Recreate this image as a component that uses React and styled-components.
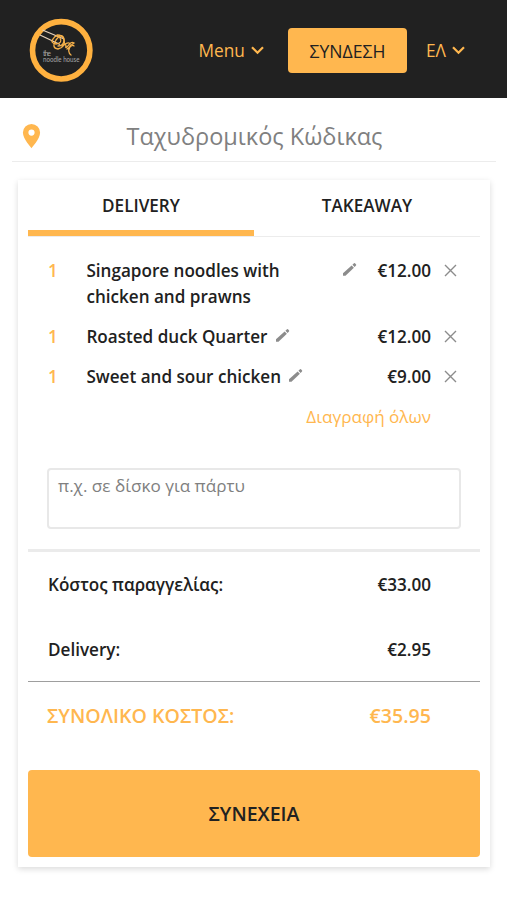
import React from 'react';
import styled, {createGlobalStyle} from 'styled-components';

const GlobalStyle=createGlobalStyle`
    *{
        box-sizing:border-box;
    }
    body{
        margin:0;
        background:#fff;
        color:#212121;
        font-family:"Open Sans","Noto Sans",sans-serif;
        font-size:17.1px;
        line-height:26px;
    }
`
const Page=styled.div`
    min-height:900px;
    display:flow-root;
`
const Header=styled.header`
    display:flex;
    align-items:center;
    height:98px;
    padding:0 42px 0 29px;
    background:#212121;
    color:#ffb74f;
`
const Logo=styled.svg`
    display:block;
    width:65px;
    height:65px;
    margin-top:2px;
`
const Nav=styled.nav`
    display:flex;
    align-items:center;
    margin-left:auto;
    padding-top:3px;
`
const NavLink=styled.a`
    display:flex;
    align-items:center;
    gap:6px;
    font-size:17.3px;
    svg{
        margin-top:-1px;
    }
`
const LoginButton=styled.button`
    width:119px;
    height:45px;
    margin:0 19px 0 24px;
    padding:0;
    border:0;
    border-radius:4px;
    background:#ffb74f;
    color:#212121;
    font:500 17.6px "Open Sans","Noto Sans",sans-serif;
`
const Postcode=styled.div`
    display:grid;
    grid-template-columns:38px 1fr 46px;
    align-items:center;
    height:64px;
    margin:0 11px 0 12px;
    padding:13px 0 0 9px;
    border-bottom:1px solid #ececec;
`
const PostcodeInput=styled.input`
    width:100%;
    border:0;
    outline:none;
    padding:0;
    background:transparent;
    text-align:center;
    font:400 23.5px "Open Sans","Noto Sans",sans-serif;
    &::placeholder{
        color:#808080;
        opacity:1;
    }
`
const Card=styled.main`
    margin:18px 17px 0 18px;
    padding:0 10px 10px;
    height:687px;
    background:#fff;
    box-shadow:0 2px 6px rgba(0,0,0,.15);
`
const Tabs=styled.div`
    display:flex;
    height:57px;
    border-bottom:1px solid #ececec;
`
const Tab=styled.div`
    flex:1;
    height:56px;
    padding-top:13px;
    text-align:center;
    font-weight:600;
    border-bottom:${props=>props.$active ? '6px solid #ffb74f' : '0'};
`
const Items=styled.div`
    display:grid;
    gap:14px;
    padding:21px 20px 0 20px;
`
const Item=styled.div`
    display:grid;
    grid-template-columns:38.4px 1fr 74px 29px;
    font-weight:600;
`
const Quantity=styled.span`
    color:#ffb74f;
`
const Description=styled.div`
    display:flex;
    justify-content:${props=>props.$wide ? 'space-between' : 'flex-start'};
    gap:7px;
    svg{
        flex:none;
        margin-top:4px;
    }
`
const Name=styled.span`
    flex:0 1 auto;
`
const Price=styled.span`
    text-align:right;
`
const Remove=styled.svg`
    margin:6px 0 0 13px;
`
const ClearAll=styled.a`
    justify-self:end;
    padding-right:29px;
    color:#ffb74f;
`
const Comment=styled.textarea`
    display:block;
    width:414px;
    height:61px;
    margin:38px 19px 20px;
    padding:4px 9px;
    resize:none;
    outline:none;
    border:2px solid #e8e8e8;
    border-radius:4px;
    font:400 17.1px/24px "Open Sans","Noto Sans",sans-serif;
    &::placeholder{
        color:#808080;
        opacity:1;
    }
`
const Costs=styled.div`
    border-top:3px solid #ebebeb;
    border-bottom:1px solid #9e9e9e;
    padding:20px 49px 18px 20px;
`
const CostRow=styled.div`
    display:flex;
    justify-content:space-between;
    font-weight:600;
    & + &{
        margin-top:39px;
    }
`
const Total=styled(CostRow)`
    padding:21px 49px 0 19px;
    color:#ffb74f;
    font-size:19.6px;
`
const Continue=styled.button`
    display:block;
    width:100%;
    height:87px;
    margin-top:41px;
    border:0;
    border-radius:4px;
    background:#ffb74f;
    color:#212121;
    font:600 19.5px "Open Sans","Noto Sans",sans-serif;
`

const items=[
    {name:<>Singapore noodles with<br/>chicken and prawns</>,price:'€12.00',wide:true},
    {name:'Roasted duck Quarter',price:'€12.00'},
    {name:'Sweet and sour chicken',price:'€9.00'},
];

const Chevron=()=>(
    <svg width="13" height="9" viewBox="0 0 13 9" fill="none" stroke="#ffb74f" strokeWidth="2.2">
        <path d="M1 1.2L6.5 6.8L12 1.2"/>
    </svg>
)

const Pencil=()=>(
    <svg width="15" height="15" viewBox="0 0 15 15" fill="#8c8c8c">
        <path d="M1 11.2L9.6 3.4L11.9 5.7L3.5 13.8H1Z"/>
        <path d="M10.4 2.7L12 1.2Q12.5.8 13 1.2L14.1 2.4Q14.5 2.9 14 3.4L12.6 5Z"/>
    </svg>
)

const BrandLogo=()=>(
    <Logo viewBox="0 0 65 65" fill="none">
        <circle cx="32.2" cy="32.3" r="28.7" stroke="#ffb13f" strokeWidth="5.6"/>
        <g stroke="#e8d3bd" strokeWidth="1.3">
            <path d="M13.5 12L35 21"/>
            <path d="M11 17L31 26.5"/>
        </g>
        <g stroke="#f5b04a" strokeWidth="1.3" strokeLinecap="round">
            <path d="M24 21Q28 15 31 20Q34 25 27 26Q21 25 24 21"/>
            <path d="M27 22Q33 14 35 21Q37 29 29 31Q22 30 27 22"/>
            <path d="M28 17Q34 17 35 22Q35 28 29 28"/>
            <path d="M33 28Q37 25 37 28Q36 31 39 28Q42 23 45 25Q41 27 40 31"/>
            <path d="M36 26Q42 23 41 28Q38 34 42 37M38 31Q44 26 45 28"/>
        </g>
        <g fill="#a8a8a8" fontFamily="Lato,sans-serif" fontWeight="400">
            <text x="14" y="37.5" fontSize="7" textLength="8">the</text>
            <text x="14" y="44.3" fontSize="7" textLength="36.5" lengthAdjust="spacingAndGlyphs">noodle house</text>
        </g>
    </Logo>
)

class App extends React.Component{
    render(){
        return(
            <Page>
                <GlobalStyle/>
                <Header>
                    <BrandLogo/>
                    <Nav>
                        <NavLink>Menu <Chevron/></NavLink>
                        <LoginButton>ΣΥΝΔΕΣΗ</LoginButton>
                        <NavLink>ΕΛ <Chevron/></NavLink>
                    </Nav>
                </Header>
                <Postcode>
                    <svg width="20" height="26" viewBox="0 0 20 26" fill="#ffb74f">
                        <path fillRule="evenodd" d="M10.5 1A8.6 8.6 0 0 0 1.9 9.6C1.9 16 10.5 25.2 10.5 25.2S19.1 16 19.1 9.6A8.6 8.6 0 0 0 10.5 1ZM10.5 6.5A3.1 3.1 0 1 1 10.5 12.7A3.1 3.1 0 0 1 10.5 6.5Z"/>
                    </svg>
                    <PostcodeInput placeholder="Ταχυδρομικός Κώδικας"/>
                </Postcode>
                <Card>
                    <Tabs>
                        <Tab $active>DELIVERY</Tab>
                        <Tab>TAKEAWAY</Tab>
                    </Tabs>
                    <Items>
                        {items.map((item,i)=>(
                            <Item key={i}>
                                <Quantity>1</Quantity>
                                <Description $wide={item.wide}>
                                    <Name>{item.name}</Name>
                                    <Pencil/>
                                </Description>
                                <Price>{item.price}</Price>
                                <Remove width="13" height="13" viewBox="0 0 13 13" stroke="#8c8c8c" strokeWidth="1.4">
                                    <path d="M1 1L12 12M12 1L1 12"/>
                                </Remove>
                            </Item>
                        ))}
                        <ClearAll>Διαγραφή όλων</ClearAll>
                    </Items>
                    <Comment placeholder="π.χ. σε δίσκο για πάρτυ"/>
                    <Costs>
                        <CostRow><span>Κόστος παραγγελίας:</span><span>€33.00</span></CostRow>
                        <CostRow><span>Delivery:</span><span>€2.95</span></CostRow>
                    </Costs>
                    <Total><span>ΣΥΝΟΛΙΚΟ ΚΟΣΤΟΣ:</span><span>€35.95</span></Total>
                    <Continue>ΣΥΝΕΧΕΙΑ</Continue>
                </Card>
            </Page>
        )
    }
}

export default App
